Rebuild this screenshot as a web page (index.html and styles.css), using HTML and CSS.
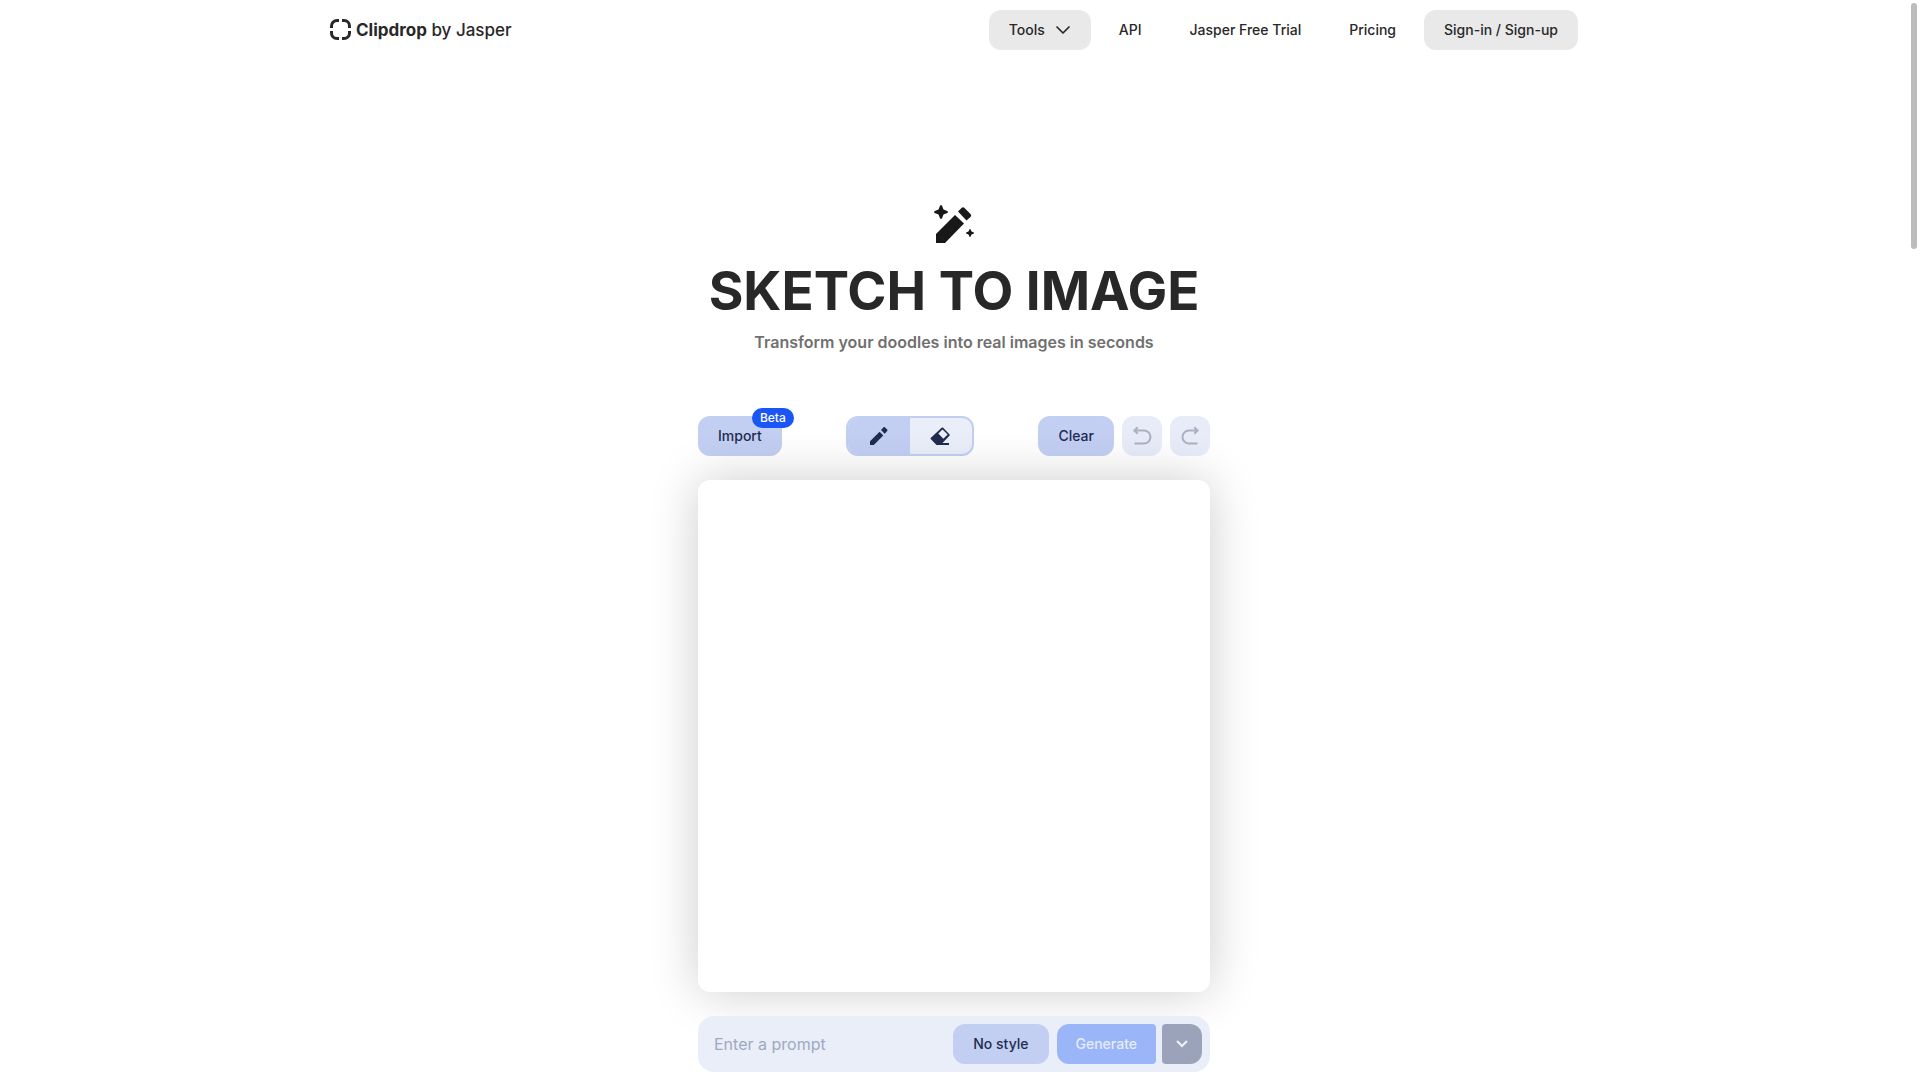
FILE: index.html
```html
<!DOCTYPE html>
<html lang="en">
<head>
  <meta charset="UTF-8">
  <meta name="viewport" content="width=device-width, initial-scale=1.0">
  <title>Sketch to Image</title>
  <link rel="stylesheet" href="styles.css">
</head>
<body>
  <header class="header">
    <a class="logo" href="#">
      <svg width="22" height="22" viewBox="0 0 22 22" fill="none" stroke="currentColor" stroke-width="3">
        <path d="M1.500 9V7a5.500 5.500 0 0 1 5.500-5.500h2M12 1.500h2a5.500 5.500 0 0 1 5.500 5.500v2M19.500 12v2a5.500 5.500 0 0 1-5.500 5.500h-2M9 19.500H7a5.500 5.500 0 0 1-5.500-5.500v-2"/>
      </svg>
      <span><strong>Clipdrop</strong> by Jasper</span>
    </a>
    <nav class="nav">
      <button class="nav-item filled" type="button">
        Tools
        <svg width="16" height="16" viewBox="0 0 16 16" fill="none" stroke="currentColor" stroke-width="1.700" stroke-linecap="round" stroke-linejoin="round">
          <path d="M2 5l6 6 6-6"/>
        </svg>
      </button>
      <a class="nav-item" href="#">API</a>
      <a class="nav-item" href="#">Jasper Free Trial</a>
      <a class="nav-item" href="#">Pricing</a>
      <a class="nav-item filled" href="#">Sign-in / Sign-up</a>
    </nav>
  </header>

  <main class="main">
    <!-- Title -->
    <section class="hero">
      <svg width="48" height="48" viewBox="0 -1 48 48" fill="currentColor">
        <path d="M6 33L25 14l9 8.500L15 42H6z"/>
        <path d="M28 10.500l3.500-3.500q1.500-1.500 3 0l6 6q1.500 1.500 0 3L36.500 19.500z"/>
        <path d="M11 4q1 0 1.500 2l1 2.500 2.500 1q2 .5 2 1.500t-2 1.500l-2.500 1-1 2.500q-.5 2-1.500 2t-1.500-2l-1-2.500-2.500-1q-2-.5-2-1.500t2-1.500l2.500-1 1-2.500q.5-2 1.500-2z"/>
        <path d="M40 28q.8 0 1.200 2l.8.800q2 .4 2 1.200t-2 1.200l-.8.800q-.4 2-1.200 2t-1.200-2l-.8-.800q-2-.4-2-1.200t2-1.200l.8-.800q.4-2 1.200-2z"/>
      </svg>
      <h1>SKETCH TO IMAGE</h1>
      <p>Transform your doodles into real images in seconds</p>
    </section>

    <!-- Sketch editor -->
    <section class="editor">
      <div class="toolbar">
        <button class="btn import" type="button">Import<span class="badge">Beta</span></button>
        <div class="switch">
          <button class="selected" type="button" aria-label="Pencil">
            <svg width="24" height="24" viewBox="0 0 24 24" fill="currentColor">
              <path d="M3 17.200L12.600 7.700l3.700 3.700L6.800 21H3zM20.200 7q.6-.7 0-1.400l-2.300-2.300q-.7-.6-1.400 0L14 6.100l3.700 3.700z"/>
            </svg>
          </button>
          <button type="button" aria-label="Eraser">
            <svg width="24" height="24" viewBox="0 0 24 24" fill="currentColor" fill-rule="evenodd">
              <path d="M12.900 3.600q.5-.4 1 0l6.700 6.800q.4.500 0 1L13.500 19H20v2H7.500l-5.800-5.900q-.4-.5 0-1zM13.500 5.400L9.300 9.600l5 5.200 4.400-4.200z"/>
            </svg>
          </button>
        </div>
        <div class="history">
          <button class="btn" type="button">Clear</button>
          <button class="btn icon" type="button" aria-label="Undo" disabled>
            <svg width="20" height="20" viewBox="0 0 20 20" fill="none" stroke="currentColor" stroke-width="2" stroke-linecap="square">
              <path d="M3.500 17.500h8.500a6.500 6.500 0 0 0 0-13H2.500M5 2L2.500 4.500 5 7"/>
            </svg>
          </button>
          <button class="btn icon" type="button" aria-label="Redo" disabled>
            <svg width="20" height="20" viewBox="0 0 20 20" fill="none" stroke="currentColor" stroke-width="2" stroke-linecap="square">
              <path d="M16.500 17.500H9a6.500 6.500 0 0 1 0-13h8.500M15 2l2.500 2.500L15 7"/>
            </svg>
          </button>
        </div>
      </div>

      <canvas class="board" width="512" height="512"></canvas>

      <form class="prompt">
        <input type="text" placeholder="Enter a prompt" aria-label="Enter a prompt">
        <button class="btn" type="button">No style</button>
        <div class="generate">
          <button class="submit" type="submit" disabled>Generate</button>
          <button class="more" type="button" aria-label="More options" disabled>
            <svg width="14" height="14" viewBox="0 0 14 14" fill="none" stroke="currentColor" stroke-width="2">
              <path d="M2 4l5 5 5-5"/>
            </svg>
          </button>
        </div>
      </form>
    </section>
  </main>

  <div class="scroll-thumb"></div>
</body>
</html>
```

FILE: styles.css
```css
* {
  box-sizing: border-box;
}

body {
  margin: 0;
  padding-right: 12px;
  background-color: white;
  color: #282828;
  font-family: Inter, "Liberation Sans", sans-serif;
  font-size: 14px;
  line-height: 20px;
}

a {
  color: inherit;
  text-decoration: none;
}

button {
  border: none;
  padding: 0;
  color: inherit;
  font-family: inherit;
  font-size: 14px;
  font-weight: 500;
  line-height: 20px;
  cursor: pointer;
}

svg {
  display: block;
  flex: none;
}

/* Header */
.header {
  display: flex;
  justify-content: space-between;
  align-items: center;
  max-width: 1280px;
  margin: 0 auto;
  padding: 10px 16px;
}

.logo {
  display: flex;
  align-items: center;
  gap: 4px;
  font-size: 17px;
  font-weight: 500;
}

.logo strong {
  font-weight: 700;
}

.nav {
  display: flex;
  gap: 8px;
}

.nav-item {
  display: flex;
  align-items: center;
  gap: 10px;
  height: 40px;
  padding: 0 20px;
  border-radius: 12px;
  background-color: transparent;
  font-weight: 500;
}

.filled {
  background-color: #e9e9e9;
}

/* Title */
.main {
  padding: 140px 16px 8px;
}

.hero {
  display: flex;
  flex-direction: column;
  align-items: center;
  text-align: center;
}

.hero svg {
  color: #181818;
}

.hero h1 {
  margin: 15px 0 11px;
  font-size: 53px;
  font-weight: 700;
  line-height: 56px;
}

.hero p {
  margin: 0;
  color: #707070;
  font-size: 16px;
  font-weight: 600;
  line-height: 24px;
}

/* Editor */
.editor {
  display: flex;
  flex-direction: column;
  gap: 24px;
  max-width: 512px;
  margin: 62px auto 0;
}

.toolbar {
  display: flex;
  justify-content: space-between;
}

.btn {
  height: 40px;
  padding: 0 20px;
  border-radius: 12px;
  background-color: #c2cff3;
  color: #1f2c50;
}

.import {
  position: relative;
}

.badge {
  position: absolute;
  top: -8px;
  right: -12px;
  padding: 0 8px;
  border-radius: 10px;
  background-color: #1a56f5;
  color: white;
  font-size: 12px;
  line-height: 20px;
}

.switch {
  display: flex;
  width: 128px;
  height: 40px;
  border: 2px solid #c2cff3;
  border-radius: 12px;
  background-color: #e9eef9;
  color: #1f2c50;
}

.switch button {
  display: flex;
  flex: 1;
  justify-content: center;
  align-items: center;
  background-color: transparent;
}

.switch .selected {
  border-radius: 10px 0 0 10px;
  background-color: #c2cff3;
}

.history {
  display: flex;
  gap: 8px;
}

.icon {
  display: flex;
  justify-content: center;
  align-items: center;
  width: 40px;
  padding: 0;
  background-color: #e8ecf9;
  color: #a9b1c2;
}

/* The shadow falls over the toolbar */
.board {
  position: relative;
  width: 100%;
  border-radius: 12px;
  background-color: white;
  box-shadow: 0 0 50px rgba(0, 0, 0, 0.2);
}

/* Prompt */
.prompt {
  position: relative;
  display: flex;
  gap: 8px;
  padding: 8px;
  border-radius: 16px;
  background-color: #e9eef9;
}

.prompt input {
  flex: 1;
  min-width: 0;
  padding: 0 8px;
  border: none;
  outline: none;
  background-color: transparent;
  font-family: inherit;
  font-size: 16px;
}

.prompt input::placeholder {
  color: #9fa9c1;
}

.generate {
  display: flex;
  gap: 6px;
}

.submit {
  padding: 0 19px;
  border-radius: 12px 4px 4px 12px;
  background-color: #9ab5f8;
  color: #e5ecfd;
}

.more {
  display: flex;
  justify-content: center;
  align-items: center;
  width: 40px;
  border-radius: 4px 12px 12px 4px;
  background-color: #9ba3bb;
  color: #f0f2f8;
}

/* Scrollbar thumb */
.scroll-thumb {
  position: fixed;
  top: 3px;
  right: 3px;
  width: 6px;
  height: 246px;
  border-radius: 3px;
  background-color: #bcbcbc;
}
```
